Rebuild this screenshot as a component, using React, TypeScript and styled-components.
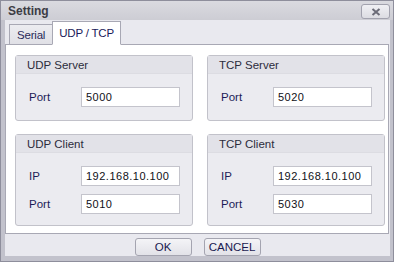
import React from "react";
import styled, { createGlobalStyle } from "styled-components";

const Global = createGlobalStyle`
  html, body { margin: 0; padding: 0; background: #c4c4ce; }
  body { font-family: "Liberation Sans", Arial, sans-serif; font-size: 11px; }
  * { box-sizing: border-box; }
`;

const Window = styled.div`
  width: 394px;
  height: 262px;
  display: flex;
  flex-direction: column;
  background: #c2c2cc;
  border: 1px solid #8e8e9c;
  overflow: hidden;
`;

const TitleBar = styled.div`
  height: 19px;
  display: flex;
  align-items: center;
  justify-content: space-between;
  padding: 1px 3px 0 7px;
  background: linear-gradient(#dadae0, #cdcdd4);
`;

const Title = styled.span`
  font-weight: bold;
  font-size: 12px;
  color: #3c3c44;
`;

const CloseButton = styled.div`
  width: 29px;
  height: 15px;
  margin-top: 1px;
  border: 1px solid #a2a2ae;
  border-radius: 3px;
  background: linear-gradient(#f0f0f4, #dcdce2);
  display: flex;
  align-items: center;
  justify-content: center;
`;

const Client = styled.div`
  flex: 1;
  margin: 0 3px 5px 4px;
  background: #e9e9ef;
  display: flex;
  flex-direction: column;
`;

const TabStrip = styled.div`
  height: 24px;
  display: flex;
  align-items: flex-end;
  padding-left: 4px;
`;

const Tab = styled.div<{ $active?: boolean }>`
  height: ${(p) => (p.$active ? 24 : 21)}px;
  padding: 0 ${(p) => (p.$active ? 6 : 7)}px;
  display: flex;
  align-items: center;
  font-size: 11.5px;
  letter-spacing: -0.2px;
  color: ${(p) => (p.$active ? "#1a1a5a" : "#2a2a5a")};
  background: ${(p) => (p.$active ? "#ffffff" : "linear-gradient(#ececf0, #e0e0e6)")};
  border: 1px solid #a8a8b4;
  border-bottom: ${(p) => (p.$active ? "1px solid #ffffff" : "1px solid #a8a8b4")};
  margin-bottom: -1px;
  position: relative;
  z-index: ${(p) => (p.$active ? 2 : 1)};
  margin-left: ${(p) => (p.$active ? -1 : 0)}px;
`;

const Panel = styled.div`
  width: 384px;
  height: 190px;
  background: #ffffff;
  border: 1px solid #a8a8b4;
  display: grid;
  grid-template-columns: 178px 178px;
  grid-template-rows: 66px 92px;
  column-gap: 14px;
  row-gap: 13px;
  padding: 10px 0 0 9px;
`;

const Group = styled.div`
  border: 1px solid #c2c2ca;
  border-radius: 3px;
  background: #ebebf0;
  display: flex;
  flex-direction: column;
`;

const GroupHeader = styled.div`
  height: 18px;
  display: flex;
  align-items: center;
  padding-left: 11px;
  font-size: 11.5px;
  color: #2c2c3c;
  background: #e2e2e8;
  border-bottom: 1px solid #dcdce2;
`;

const GroupBody = styled.div`
  display: flex;
  flex-direction: column;
  gap: 8px;
  padding: 13px 0 0 13px;
`;

const Row = styled.div`
  display: flex;
  align-items: center;
`;

const Label = styled.span`
  width: 52px;
  font-size: 11.5px;
  color: #1c1c58;
`;

const Input = styled.div`
  width: 99px;
  height: 20px;
  background: #ffffff;
  border: 1px solid #c4c4cc;
  display: flex;
  align-items: center;
  padding-left: 4px;
  font-size: 11px;
  letter-spacing: 0.5px;
  color: #101018;
`;

const ButtonBar = styled.div`
  flex: 1;
  display: flex;
  align-items: center;
  justify-content: center;
  gap: 12px;
  padding-top: 3px;
`;

const Button = styled.div`
  width: 57px;
  height: 18px;
  border: 1px solid #a4a4b0;
  border-radius: 3px;
  background: linear-gradient(#f4f4f7, #e2e2e8);
  display: flex;
  align-items: center;
  justify-content: center;
  font-size: 11.5px;
  color: #1a1a50;
`;

const CloseIcon = () => (
  <svg width="10" height="8" viewBox="0 0 10 8">
    <path d="M1.5 1 L8.5 7 M8.5 1 L1.5 7" stroke="#6c6c78" strokeWidth="2" strokeLinecap="butt" />
  </svg>
);

const Field = ({ label, value }: { label: string; value: string }) => (
  <Row>
    <Label>{label}</Label>
    <Input>{value}</Input>
  </Row>
);

export default function App() {
  return (
    <>
      <Global />
      <Window>
        <TitleBar>
          <Title>Setting</Title>
          <CloseButton>
            <CloseIcon />
          </CloseButton>
        </TitleBar>
        <Client>
          <TabStrip>
            <Tab>Serial</Tab>
            <Tab $active>UDP / TCP</Tab>
          </TabStrip>
          <Panel>
            <Group>
              <GroupHeader>UDP Server</GroupHeader>
              <GroupBody>
                <Field label="Port" value="5000" />
              </GroupBody>
            </Group>
            <Group>
              <GroupHeader>TCP Server</GroupHeader>
              <GroupBody>
                <Field label="Port" value="5020" />
              </GroupBody>
            </Group>
            <Group>
              <GroupHeader>UDP Client</GroupHeader>
              <GroupBody>
                <Field label="IP" value="192.168.10.100" />
                <Field label="Port" value="5010" />
              </GroupBody>
            </Group>
            <Group>
              <GroupHeader>TCP Client</GroupHeader>
              <GroupBody>
                <Field label="IP" value="192.168.10.100" />
                <Field label="Port" value="5030" />
              </GroupBody>
            </Group>
          </Panel>
          <ButtonBar>
            <Button>OK</Button>
            <Button>CANCEL</Button>
          </ButtonBar>
        </Client>
      </Window>
    </>
  );
}
